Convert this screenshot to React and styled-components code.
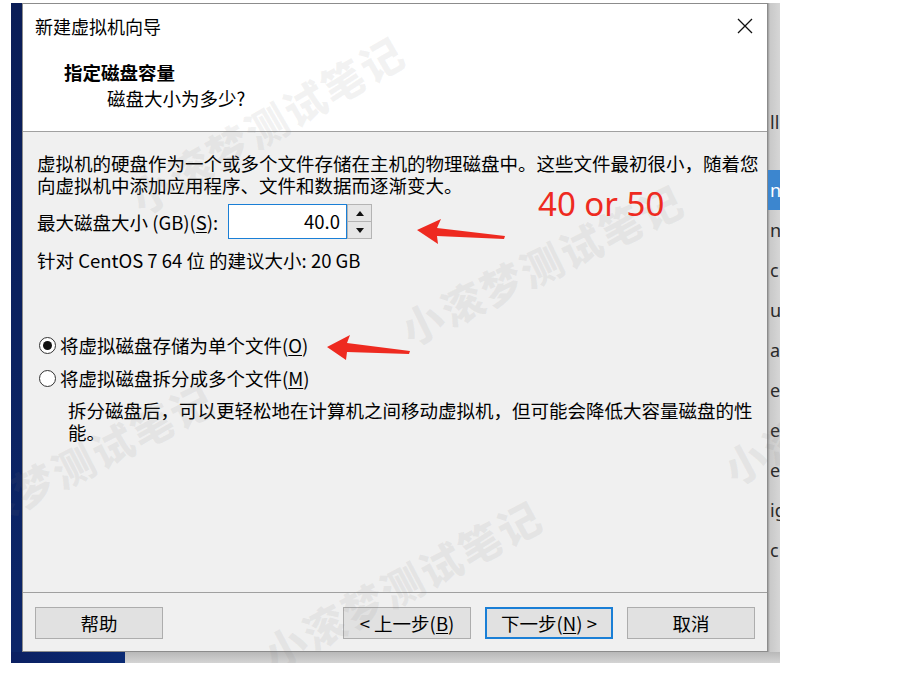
import React from 'react';
import styled, { createGlobalStyle } from 'styled-components';

const GlobalStyle = createGlobalStyle`
  body {
    margin: 0;
    background: #fff;
    font-family: "Noto Sans CJK SC", "Noto Sans", sans-serif;
  }
`;

const Page = styled.div`
  position: relative;
  width: 903px;
  height: 679px;
  overflow: hidden;
  background: #fff;
`;

const Shot = styled.div`
  margin: 3px 0 0 11px;
  width: 769px;
  display: flex;
  flex-direction: column;
`;

const TopRow = styled.div`
  display: flex;
  height: 649px;
`;

const BlueEdge = styled.div`
  width: 11px;
  background: linear-gradient(180deg, #0a1d57, #0c2669);
`;

const Dialog = styled.div`
  width: 746px;
  box-sizing: border-box;
  border: 1px solid #8c8c8c;
  background: #f0f0f0;
  display: flex;
  flex-direction: column;
  color: #000;
  font-size: 18.5px;
`;

const SideStrip = styled.div`
  width: 12px;
  overflow: hidden;
  background: linear-gradient(90deg, #9c9c9c 0, #c9c9c9 2px, #d6d6d6 100%);
  padding-top: 99px;
  box-sizing: border-box;
  font-family: "Noto Sans", sans-serif;
  font-size: 18px;
  color: #2a2a2a;
`;

const StripRow = styled.div`
  height: 40px;
  line-height: 40px;
  padding-left: 2px;
  white-space: nowrap;
  margin-bottom: ${(p) => p.$gap || 0}px;
  background: ${(p) => (p.$active ? '#3c86cf' : 'transparent')};
  color: ${(p) => (p.$active ? '#fff' : 'inherit')};
`;

const BottomRow = styled.div`
  display: flex;
  height: 11px;
`;

const BlueFoot = styled.div`
  width: 114px;
  background: linear-gradient(90deg, #0b2062, #0a2a74);
`;

const GrayFoot = styled.div`
  flex: 1;
  background: linear-gradient(180deg, #b8b8b8, #d4d4d4);
`;

const TitleBar = styled.div`
  height: 44px;
  padding: 0 14px 0 12px;
  background: #fff;
  display: flex;
  align-items: center;
  justify-content: space-between;
  font-size: 18px;
`;

const Header = styled.div`
  background: #fff;
  padding: 11px 0 20px 41px;
  border-bottom: 1px solid #a0a0a0;
  line-height: 26px;
`;

const HeaderTitle = styled.div`
  font-weight: 700;
`;

const HeaderSub = styled.div`
  padding-left: 43px;
`;

const Body = styled.div`
  flex: 1;
  padding: 20px 0 0 14px;
  line-height: 22px;
`;

const Para = styled.p`
  margin: ${(p) => p.$top || 0}px 0 0;
  padding-left: ${(p) => p.$indent || 0}px;
  white-space: nowrap;
`;

const SizeRow = styled.div`
  display: flex;
  align-items: center;
  margin-top: 8px;
  height: 35px;
`;

const SizeLabel = styled.span`
  width: 191px;
`;

const NumBox = styled.div`
  width: 119px;
  height: 35px;
  box-sizing: border-box;
  border: 1px solid #1a7fd6;
  background: #fff;
  text-align: right;
  padding-right: 6px;
  line-height: 33px;
`;

const Spinner = styled.div`
  width: 25px;
  height: 35px;
  display: flex;
  flex-direction: column;
`;

const SpinBtn = styled.div`
  flex: 1;
  box-sizing: border-box;
  border: 1px solid #b4b4b4;
  border-top-width: ${(p) => (p.$down ? 0 : 1)}px;
  background: #e6e6e6;
  display: flex;
  align-items: center;
  justify-content: center;
`;

const RadioRow = styled.label`
  display: flex;
  align-items: center;
  gap: 4px;
  height: 28px;
  margin: ${(p) => p.$top}px 0 0 2px;
  white-space: nowrap;
`;

const RadioCircle = styled.span`
  width: 17px;
  height: 17px;
  box-sizing: border-box;
  border: 1px solid #333;
  border-radius: 50%;
  background: #fff;
  display: grid;
  place-items: center;

  &::after {
    content: '';
    width: 9px;
    height: 9px;
    border-radius: 50%;
    background: ${(p) => (p.$checked ? '#111' : 'transparent')};
  }
`;

const Key = styled.span`
  text-decoration: underline;
  text-underline-offset: 2px;
`;

const Footer = styled.div`
  border-top: 1px solid #a0a0a0;
  padding: 14px 12px 12px;
  display: flex;
  justify-content: space-between;
`;

const BtnGroup = styled.div`
  display: flex;
  gap: 14px;
`;

const Btn = styled.button`
  width: 128px;
  height: 32px;
  box-sizing: border-box;
  border: ${(p) => (p.$primary ? '2px solid #1a7fd6' : '1px solid #adadad')};
  background: #e1e1e1;
  font: inherit;
  color: #000;
  padding: 0;
  display: flex;
  align-items: center;
  justify-content: center;
`;

const Note = styled.div`
  position: absolute;
  left: 538px;
  top: 182px;
  font-size: 33px;
  line-height: 44px;
  color: #ee2a20;
  font-family: "Noto Sans", "Noto Sans CJK SC", sans-serif;
`;

const Overlay = styled.svg`
  position: absolute;
  left: 0;
  top: 0;
  pointer-events: none;
`;

const WatermarkLayer = styled.div`
  position: absolute;
  left: 11px;
  top: 3px;
  width: 769px;
  height: 660px;
  overflow: hidden;
  pointer-events: none;
`;

const Watermark = styled.span`
  position: absolute;
  left: ${(p) => p.$x}px;
  top: ${(p) => p.$y}px;
  transform: rotate(${(p) => p.$r}deg);
  transform-origin: left center;
  font-size: 42px;
  font-weight: 900;
  letter-spacing: 2px;
  color: rgba(120, 120, 120, 0.09);
  white-space: nowrap;
`;

const stripLetters = ['c', 'u', 'a', 'e', 'e', 'e', 'ig', 'c'];

const Tri = ({ down }) => (
  <svg width="8" height="5" viewBox="0 0 8 5">
    <path d={down ? 'M0 0h8L4 5z' : 'M0 5h8L4 0z'} fill="#111" />
  </svg>
);

export default function App() {
  return (
    <Page>
      <GlobalStyle />
      <Shot>
        <TopRow>
          <BlueEdge />
          <Dialog>
            <TitleBar>
              <span>新建虚拟机向导</span>
              <svg width="16" height="16" viewBox="0 0 16 16">
                <path d="M1 1L15 15M15 1L1 15" stroke="#111" strokeWidth="1.3" />
              </svg>
            </TitleBar>
            <Header>
              <HeaderTitle>指定磁盘容量</HeaderTitle>
              <HeaderSub>磁盘大小为多少?</HeaderSub>
            </Header>
            <Body>
              <Para>
                虚拟机的硬盘作为一个或多个文件存储在主机的物理磁盘中。这些文件最初很小，随着您
                <br />
                向虚拟机中添加应用程序、文件和数据而逐渐变大。
              </Para>
              <SizeRow>
                <SizeLabel>
                  最大磁盘大小 (GB)(<Key>S</Key>):
                </SizeLabel>
                <NumBox>40.0</NumBox>
                <Spinner>
                  <SpinBtn>
                    <Tri />
                  </SpinBtn>
                  <SpinBtn $down>
                    <Tri down />
                  </SpinBtn>
                </Spinner>
              </SizeRow>
              <Para $top={10}>针对 CentOS 7 64 位 的建议大小: 20 GB</Para>
              <RadioRow $top={60}>
                <RadioCircle $checked />
                <span>
                  将虚拟磁盘存储为单个文件(<Key>O</Key>)
                </span>
              </RadioRow>
              <RadioRow $top={5}>
                <RadioCircle />
                <span>
                  将虚拟磁盘拆分成多个文件(<Key>M</Key>)
                </span>
              </RadioRow>
              <Para $top={7} $indent={31}>
                拆分磁盘后，可以更轻松地在计算机之间移动虚拟机，但可能会降低大容量磁盘的性
                <br />
                能。
              </Para>
            </Body>
            <Footer>
              <Btn>帮助</Btn>
              <BtnGroup>
                <Btn>
                  &lt; 上一步(<Key>B</Key>)
                </Btn>
                <Btn $primary>
                  下一步(<Key>N</Key>) &gt;
                </Btn>
                <Btn>取消</Btn>
              </BtnGroup>
            </Footer>
          </Dialog>
          <SideStrip>
            <StripRow $gap={28}>ll</StripRow>
            <StripRow $active>n</StripRow>
            <StripRow>n</StripRow>
            {stripLetters.map((l, i) => (
              <StripRow key={i}>{l}</StripRow>
            ))}
          </SideStrip>
        </TopRow>
        <BottomRow>
          <BlueFoot />
          <GrayFoot />
        </BottomRow>
      </Shot>

      <WatermarkLayer>
        <Watermark $x={122} $y={167} $r={-30}>小滚梦测试笔记</Watermark>
        <Watermark $x={392} $y={297} $r={-26}>小滚梦测试笔记</Watermark>
        <Watermark $x={-75} $y={500} $r={-27}>小滚梦测试笔记</Watermark>
        <Watermark $x={255} $y={622} $r={-28}>小滚梦测试笔记</Watermark>
        <Watermark $x={715} $y={437} $r={-28}>小滚梦测试笔记</Watermark>
      </WatermarkLayer>

      <Note>40 or 50</Note>
      <Overlay width="903" height="679" viewBox="0 0 903 679">
        <polygon
          points="417,230 441,219 437,228 505,236 504,239 437,236 438,244"
          fill="#ee2a20"
        />
        <polygon
          points="327,347 350,335 347,343 410,351 409,354 347,352 346,360"
          fill="#ee2a20"
        />
      </Overlay>
    </Page>
  );
}
